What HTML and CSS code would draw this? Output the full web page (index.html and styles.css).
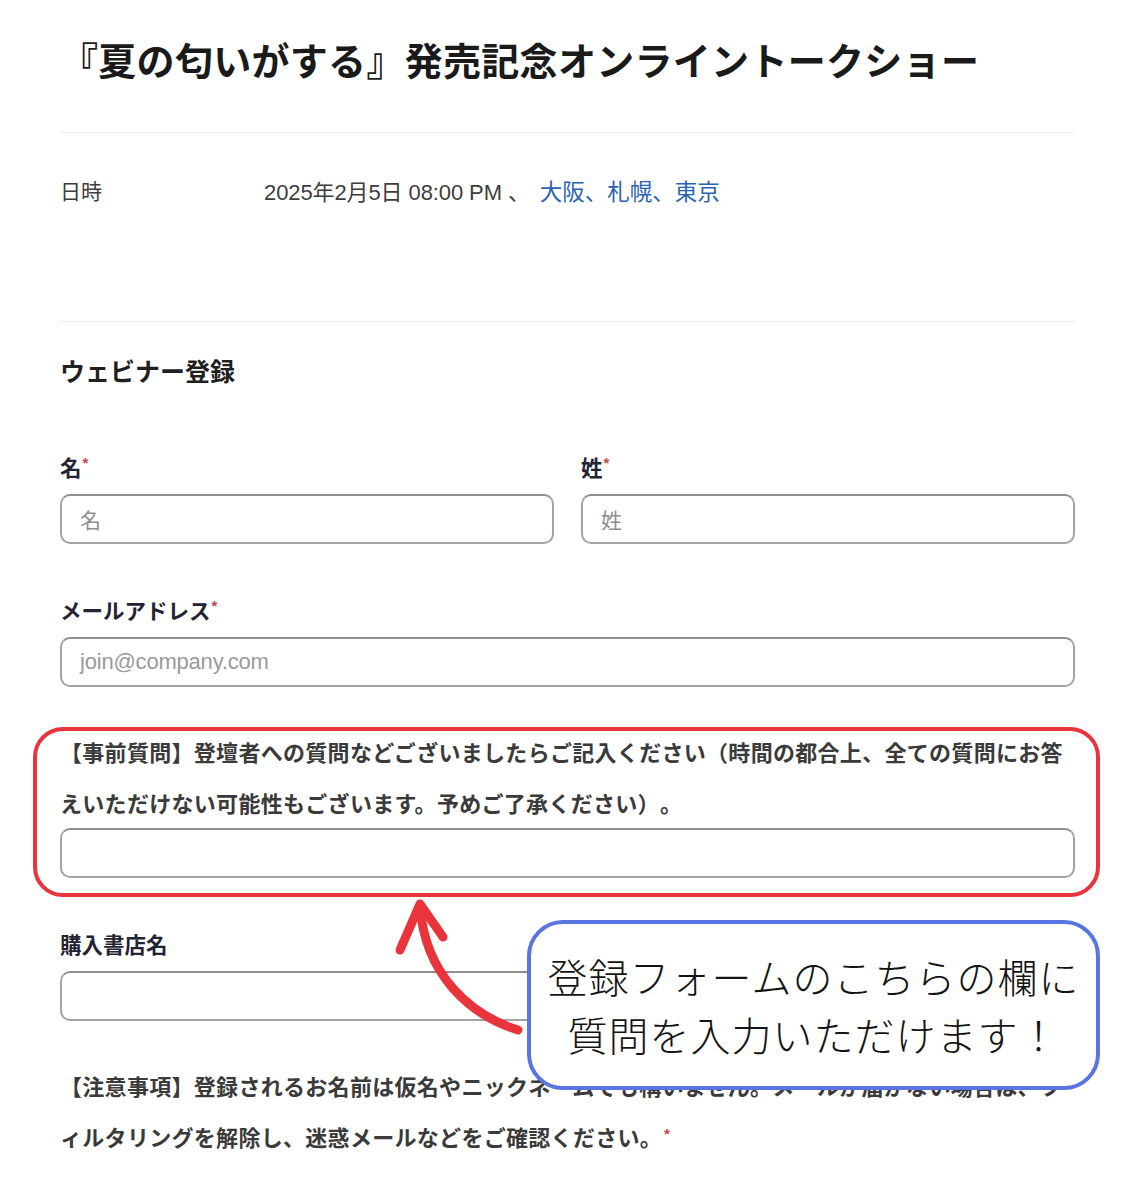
FILE: index.html
```html
<!DOCTYPE html>
<html lang="ja">
<head>
<meta charset="utf-8">
<title>『夏の匂いがする』発売記念オンライントークショー</title>
<link rel="stylesheet" href="styles.css">
</head>
<body>
<div class="page">
  <h1 class="title">『夏の匂いがする』発売記念オンライントークショー</h1>
  <hr class="rule">
  <div class="info-row">
    <div class="info-label">日時</div>
    <div class="info-value">2025年2月5日 08:00 PM 、 <span class="link">大阪、札幌、東京</span></div>
  </div>
  <hr class="rule rule-2">
  <h2 class="section-title">ウェビナー登録</h2>

  <div class="form">
    <div class="row-2">
      <div class="field">
        <div class="label">名<span class="req">*</span></div>
        <div class="input"><span class="ph">名</span></div>
      </div>
      <div class="field">
        <div class="label">姓<span class="req">*</span></div>
        <div class="input"><span class="ph">姓</span></div>
      </div>
    </div>

    <div class="field">
      <div class="label">メールアドレス<span class="req">*</span></div>
      <div class="input"><span class="ph ph-latin">join@company.com</span></div>
    </div>

    <div class="field question">
      <div class="long-label">【事前質問】登壇者への質問などございましたらご記入ください（時間の都合上、全ての質問にお答えいただけない可能性もございます。予めご了承ください）。</div>
      <div class="input"></div>
      <div class="highlight"></div>
    </div>

    <div class="field">
      <div class="label">購入書店名</div>
      <div class="input"></div>
    </div>

    <div class="field notice">
      <div class="long-label">【注意事項】登録されるお名前は仮名やニックネームでも構いません。メールが届かない場合は、フィルタリングを解除し、迷惑メールなどをご確認ください。<span class="req">*</span></div>
    </div>
  </div>

  <svg class="arrow" width="160" height="160" viewBox="0 0 160 160" aria-hidden="true">
    <path d="M138 140 C90 125 45 85 40 16" fill="none" stroke="#e8343a" stroke-width="9" stroke-linecap="round"/>
    <path d="M20 60 L40 14 L63 47" fill="none" stroke="#e8343a" stroke-width="9" stroke-linecap="round" stroke-linejoin="round"/>
  </svg>

  <div class="callout">
    <p class="callout-text">登録フォームのこちらの欄に<br>質問を入力いただけます！</p>
  </div>
</div>
</body>
</html>
```

FILE: styles.css
```css
* { box-sizing: border-box; }

html, body {
  margin: 0;
  padding: 0;
  background: #ffffff;
}

body {
  font-family: "Liberation Sans", "Noto Sans CJK JP", sans-serif;
  color: #232333;
  text-spacing-trim: space-all;
}

.page {
  position: relative;
  width: 1134px;
  height: 1200px;
  overflow: hidden;
  padding: 34px 59px 0 60px;
}

.title {
  margin: 0;
  font-family: "Noto Sans CJK JP", sans-serif;
  font-size: 38px;
  line-height: 49px;
  font-weight: 700;
  color: #1a1a1a;
  white-space: nowrap;
  letter-spacing: 0.3px;
}

.rule {
  margin: 49px 0 0 0;
  border: 0;
  border-top: 1px solid #ececec;
  height: 0;
}

.rule-2 {
  margin-top: 114px;
}

.info-row {
  display: flex;
  margin-top: 43px;
  font-size: 22px;
  line-height: 28px;
  color: #3d3d3d;
}

.info-label {
  width: 204px;
  font-family: "Noto Sans CJK JP", sans-serif;
  font-size: 21px;
}

.info-value {
  letter-spacing: -0.1px;
}

.link {
  color: #2a63b0;
  font-family: "Noto Sans CJK JP", sans-serif;
  font-size: 22.5px;
  letter-spacing: 0;
  margin-left: 4px;
}

.section-title {
  margin: 32px 0 0 0;
  font-family: "Noto Sans CJK JP", sans-serif;
  font-size: 25px;
  line-height: 32px;
  font-weight: 700;
  color: #1f1f1f;
}

.form {
  display: flex;
  flex-direction: column;
  gap: 52px;
  margin-top: 67px;
}

.row-2 {
  display: grid;
  grid-template-columns: 1fr 1fr;
  gap: 27px;
}

.field {
  display: flex;
  flex-direction: column;
}

.label {
  font-family: "Noto Sans CJK JP", sans-serif;
  font-size: 21.5px;
  line-height: 28px;
  font-weight: 700;
  color: #232333;
  margin-bottom: 13px;
}

.req {
  color: #c9404a;
  font-size: 15px;
  vertical-align: top;
  line-height: 20px;
  margin-left: 1px;
  font-family: "Liberation Sans", sans-serif;
  font-weight: 700;
}

.input {
  height: 50px;
  border: 2px solid #a3a3a6;
  border-top-color: #8f8f92;
  border-radius: 10px;
  background: #ffffff;
  display: flex;
  align-items: center;
  padding-left: 18px;
}

.ph {
  font-family: "Noto Sans CJK JP", sans-serif;
  font-size: 21px;
  color: #8e8e8e;
}

.ph-latin {
  font-family: "Liberation Sans", sans-serif;
  font-size: 22px;
  color: #9a9a9a;
  letter-spacing: -0.2px;
}

.question {
  position: relative;
  margin-top: -13px;
}

.long-label {
  font-family: "Noto Sans CJK JP", sans-serif;
  font-size: 22px;
  line-height: 51px;
  font-weight: 700;
  color: #3a3a3a;
  letter-spacing: 0.3px;
}

.long-label .req {
  font-size: 15px;
  line-height: 1;
  vertical-align: 7px;
  margin-left: 2px;
}

.highlight {
  position: absolute;
  top: 1px;
  left: -27px;
  right: -25px;
  bottom: -19px;
  border: 4px solid #e8343a;
  border-radius: 30px;
  pointer-events: none;
}

.notice {
  margin-top: -13px;
}

.arrow {
  position: absolute;
  left: 380px;
  top: 890px;
}

.callout {
  position: absolute;
  left: 527px;
  top: 920px;
  width: 573px;
  height: 170px;
  border: 4.5px solid #5a74e2;
  border-radius: 36px;
  background: #ffffff;
  display: flex;
  align-items: center;
  justify-content: center;
}

.callout-text {
  margin: 0;
  font-family: "Noto Sans CJK JP", sans-serif;
  font-weight: 300;
  font-size: 40px;
  line-height: 58px;
  color: #141414;
  text-align: center;
  letter-spacing: 1px;
}
```
